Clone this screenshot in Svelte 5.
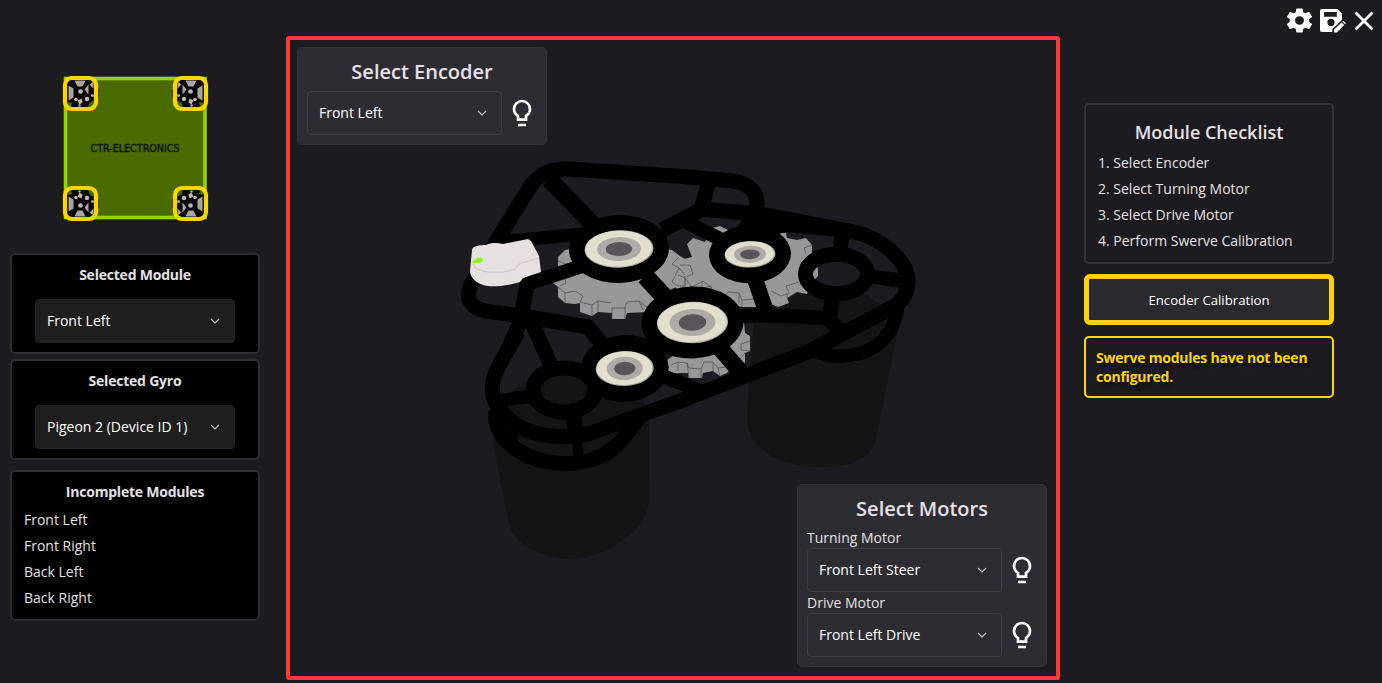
<script>
  const modules = ["Front Left", "Front Right", "Back Left", "Back Right"]
  const steps = [
    "Select Encoder",
    "Select Turning Motor",
    "Select Drive Motor",
    "Perform Swerve Calibration",
  ]

  // wheel pods on the robot overview, mirrored into each corner
  const pods = [
    { x: 80.5, y: 93.5, sx: 1, sy: 1 },
    { x: 190.5, y: 93.5, sx: -1, sy: 1 },
    { x: 80.5, y: 203.5, sx: 1, sy: -1 },
    { x: 190.5, y: 203.5, sx: -1, sy: -1 },
  ]

  // solid bearings: outer housing, then race, ring and bore
  const bearings = [
    { x: 619, y: 249, r: [50, 34, 34.5, 18.7, 22, 12, 13.2, 7.1] },
    { x: 750, y: 254.3, r: [41, 29, 25.5, 13.3, 16, 8.6, 9.8, 4.9] },
    { x: 692.5, y: 322.5, r: [51, 36, 35.7, 20.7, 23, 13.5, 13.7, 8.2] },
    { x: 624.7, y: 368.5, r: [44, 33.5, 29, 17.5, 18, 11.7, 10.7, 6.7] },
  ]

  const struts = [
    ["M549 179L596 228", 17],
    ["M499 242L583 234", 13],
    ["M527 284L582 266", 14],
    ["M528 280L521 316", 15],
    ["M523 316L508 349", 15],
    ["M529 316L552 368", 15],
    ["M708 184L701 210", 15],
    ["M712 204L662 230", 15],
    ["M684 221L722 240", 14],
    ["M754 276L767 314", 16],
    ["M738 316Q785 314 834 319", 14],
    ["M833 296L829 319L843 334", 15],
    ["M842 234L840 252", 15],
    ["M868 276L904 281", 14],
    ["M645 276L672 305", 18],
    ["M720 348L744 376", 17],
    ["M655 373L701 391", 14],
    ["M496 401L532 396", 13],
    ["M512 422L513 447", 10],
    ["M573 416L577 438", 16],
    ["M576 434L579 459", 10],
  ]
</script>

{#snippet select(value, quiet)}
  <button class="select" class:quiet>
    <span>{value}</span>
    <svg width="10" height="6" viewBox="0 0 10 6">
      <path d="M1 1L5 5L9 1" fill="none" stroke="#c4c4c6" stroke-width="1.1" />
    </svg>
  </button>
{/snippet}

{#snippet bulb()}
  <svg width="32" height="32" viewBox="0 0 24 24" fill="#fff">
    <path
      d="M12 2A7 7 0 0 1 19 9C19 11.4 17.8 13.5 16 14.7V18H8V14.7C6.2 13.5 5 11.4 5 9A7 7 0 0 1 12 2M9 20H15V22H9ZM12 4A5 5 0 0 0 7 9C7 11 8.2 12.8 10 13.6V16H14V13.6C15.8 12.8 17 11 17 9A5 5 0 0 0 12 4Z"
      fill-rule="evenodd"
    />
  </svg>
{/snippet}

<div class="app">
  <aside class="left">
    <svg class="robot" width="150" height="150" viewBox="61 73 150 150">
      <rect x="65.5" y="78.5" width="139.5" height="139" fill="#4a6b00" stroke="#94d500" stroke-width="3.6" />
      <text x="90.5" y="151.5" textLength="89" lengthAdjust="spacingAndGlyphs">CTR-ELECTRONICS</text>
      {#each pods as p}
        <g transform="translate({p.x} {p.y}) scale({p.sx} {p.sy})">
          <path d="M-14 -14H9L13 -11L18 -4V4L12 8L7 14L2 17H-3L-6 14L-14 11Z" fill="#050505" />
          <path d="M-12 -8L-7 -5V4L-12 7ZM-6 -13H5L2 -7H-3ZM4 -4L8 -9V1ZM9 -9L13 -12V-5Z" fill="#aaa69e" />
          <path d="M-13 9L-8 9L-10 13H-13ZM9 9L13 7V13H8Z" fill="#4a6b00" />
          <path d="M-3 7L1 5L2 9L-1 11Z" fill="#bdb9b2" />
          <circle cx="0" cy="-2" r="4.6" fill="#050505" />
          <circle cx="0" cy="-2" r="2.3" fill="#bdb9b2" />
          <circle cx="6.5" cy="5.5" r="2.2" fill="#bdb9b2" />
          <circle cx="-4.5" cy="6" r="1.8" fill="#bdb9b2" />
          <circle cx="-1" cy="12" r="1.3" fill="#aaa69e" />
          <circle cx="12" cy="2" r="1.5" fill="#aaa69e" />
        </g>
        <rect x={p.x - 15.5} y={p.y - 15.5} width="31" height="31" rx="7" fill="none" stroke="#ffd500" stroke-width="4.2" />
      {/each}
    </svg>

    <section class="card">
      <h3>Selected Module</h3>
      {@render select("Front Left", true)}
    </section>
    <section class="card">
      <h3>Selected Gyro</h3>
      {@render select("Pigeon 2 (Device ID 1)", true)}
    </section>
    <section class="card incomplete">
      <h3>Incomplete Modules</h3>
      <ul>
        {#each modules as name}
          <li>{name}</li>
        {/each}
      </ul>
    </section>
  </aside>

  <main>
    <svg width="766" height="636" viewBox="290 40 766 636">
      <!-- motors -->
      <g fill="#141414">
        <path d="M493 443L508 520C513 547 544 559 574 559C606 558 648 529 648.5 503L649 417L642 398L600 370L530 379L500 400Z" />
        <path d="M754 320L747 415C746 448 776 467 823 467C856 467 872 455 876 440L897 335L888 309L867 295L800 290L780 310Z" />
      </g>

      <!-- gears -->
      <g fill="#989898">
        <path d="M565 250L558 257V265L562 278L553 283L558 287V297L565 303L575 304L580 303V312L592 316L598 312L612 313V319H625L627 313L647 312L670 290L690 280V262L680 256L672 250L620 240Z" />
        <path d="M712 228L720 226L728 230L740 235L780 233L786 233L787 238L797 240L806 238L812 245V253L805 262L813 268L818 266V276L810 285L807 294L797 292L787 298L789 303L778 307L773 305L757 307H742L680 292L672 284V262L692 257L687 244L693 238L705 242Z" />
        <path d="M744 322L745 333L750 336V351L745 353V363L737 362L727 373L720 376L713 371L703 373L702 378H689L688 373L680 373L668 374L667 360L673 356L700 340Z" />
      </g>
      <g fill="none" stroke="#555" stroke-width=".8">
        <path d="M558 261L566 264M558 280L565 277L566 283L560 286M558 287L565 293V303M565 293L575 291L583 296L580 302M580 302L592 305V316M592 305L598 301L611 303M598 301V312M612 308H625V319M612 308V319M625 308L627 302L639 301L647 307M639 301L643 310" />
        <path d="M678 258L672 264L679 268L672 282L678 286H685V278L678 275M679 268L685 275M685 278L692 287L703 281L712 288M685 286V276M680 265L690 265L693 274L686 277M702 281V288L712 286M724 297L728 292L739 293L742 300L756 299M739 293V303M742 300V307" />
        <path d="M771 291L781 296L789 293L786 286L799 282M787 293V298M804 248L812 245M804 248L806 254" />
        <path d="M671 365L678 362L687 363L689 368L701 369L704 362L713 362L718 368L727 367M678 362V371M687 363L689 378M701 369V378M713 362V371M718 368L720 376M741 344L750 341M741 344V350L750 351M745 353L739 360" />
      </g>

      <!-- frame plates -->
      <g fill="none" stroke="#000" stroke-width="15" stroke-linejoin="round">
        <path d="M570 169C549 168 538 175 530 187L497 240L472 283C464 298 470 307 485 311L528 317L588 327L607 350" />
        <path d="M569 169L690 177L733 181C751 184 758 194 757 204L753 220" />
        <path d="M700 209L760 214L850 231C882 237 908 261 908 281C908 292 903 301 893 307L810 351L680 401L588 434C560 439 535 437 515 424C495 410 489 394 494 377C497 366 509 349 518 332" />
        <path d="M496 411C492 440 525 462 563 463.5C590 464 610 454 621 441L641 415" />
        <path d="M898 305C894 342 868 358 831 356L812 350" stroke-width="13.5" />
        <ellipse cx="564" cy="390" rx="31" ry="22" />
        <ellipse cx="836.5" cy="274" rx="31" ry="19.7" />
        {#each struts as [d, width]}
          <path {d} stroke-width={width} />
        {/each}
      </g>
      <path d="M735 232L742 220L765 212L850 224V238L785 232L760 240Z" />

      {#each bearings as b}
        <g transform="translate({b.x} {b.y}) rotate(-2)">
          <ellipse rx={b.r[0]} ry={b.r[1]} />
          <ellipse rx={b.r[2]} ry={b.r[3]} fill="#a9a9a4" />
          <ellipse rx={b.r[2] - 1} ry={b.r[3] - 0.7} cx="-.3" cy="-.3" fill="#e2dfcc" />
          <ellipse rx={b.r[4]} ry={b.r[5]} fill="#aeaaa8" />
          <ellipse rx={b.r[6]} ry={b.r[7]} fill="#5b5559" />
        </g>
      {/each}

      <!-- encoder -->
      <path
        d="M472 250C472 246 480 245 486 245C492 242 498 243 503 244L528 239L531 241L539 256L541 272L523 278L520 282C510 285 495 287 488 286C479 285 470 279 470 271Z"
        fill="#e6e0e1"
      />
      <path d="M473 264C476 272 489 273 504 272L514 270L519 264L539 258" fill="none" stroke="#cdc7c8" />
      <path d="M472 261L476 259C479 256 483 258 483 260C482 263 479 263 475 263L473 263Z" fill="#86ff16" />
    </svg>

    <section class="panel encoder">
      <h2>Select Encoder</h2>
      <div class="row">
        {@render select("Front Left", false)}
        {@render bulb()}
      </div>
    </section>

    <section class="panel motors">
      <h2>Select Motors</h2>
      <p>Turning Motor</p>
      <div class="row">
        {@render select("Front Left Steer", false)}
        {@render bulb()}
      </div>
      <p>Drive Motor</p>
      <div class="row">
        {@render select("Front Left Drive", false)}
        {@render bulb()}
      </div>
    </section>
  </main>

  <aside class="right">
    <nav>
      <svg width="31" height="29" viewBox="0 0 24 24" preserveAspectRatio="none" fill="#fff">
        <path
          d="M12,15.5A3.5,3.5 0 0,1 8.5,12A3.5,3.5 0 0,1 12,8.5A3.5,3.5 0 0,1 15.5,12A3.5,3.5 0 0,1 12,15.5M19.43,12.97C19.47,12.65 19.5,12.33 19.5,12C19.5,11.67 19.47,11.34 19.43,11L21.54,9.37C21.73,9.22 21.78,8.95 21.66,8.73L19.66,5.27C19.54,5.05 19.27,4.96 19.05,5.05L16.56,6.05C16.04,5.66 15.5,5.32 14.87,5.07L14.5,2.42C14.46,2.18 14.25,2 14,2H10C9.75,2 9.54,2.18 9.5,2.42L9.13,5.07C8.5,5.32 7.96,5.66 7.44,6.05L4.95,5.05C4.73,4.96 4.46,5.05 4.34,5.27L2.34,8.73C2.21,8.95 2.27,9.22 2.46,9.37L4.57,11C4.53,11.34 4.5,11.67 4.5,12C4.5,12.33 4.53,12.65 4.57,12.97L2.46,14.63C2.27,14.78 2.21,15.05 2.34,15.27L4.34,18.73C4.46,18.95 4.73,19.03 4.95,18.95L7.44,17.94C7.96,18.34 8.5,18.68 9.13,18.93L9.5,21.58C9.54,21.82 9.75,22 10,22H14C14.25,22 14.46,21.82 14.5,21.58L14.87,18.93C15.5,18.67 16.04,18.34 16.56,17.94L19.05,18.95C19.27,19.03 19.54,18.95 19.66,18.73L21.66,15.27C21.78,15.05 21.73,14.78 21.54,14.63L19.43,12.97Z"
        />
      </svg>
      <!-- floppy disk with pencil -->
      <svg width="30" height="30" viewBox="0 0 30 30" fill="#fff">
        <path
          d="M5 3H20.5L25 7.5V14L15.3 23V26H5A2 2 0 0 1 3 24V5A2 2 0 0 1 5 3M7 6V10.7H19.8V6ZM14 12.8A3.6 3.6 0 1 0 14 20A3.6 3.6 0 1 0 14 12.8"
          fill-rule="evenodd"
        />
        <path d="M17 26.4V23.6L24.6 16.4L27.2 19L19.8 26.4ZM25.4 15.7L26.4 14.8L29 17.3L28 18.3Z" />
      </svg>
      <svg width="30" height="30" viewBox="0 0 24 24">
        <path d="M5.2 5.2L18.8 18.8M18.8 5.2L5.2 18.8" stroke="#fff" stroke-width="2.2" />
      </svg>
    </nav>

    <section class="checklist">
      <h2>Module Checklist</h2>
      <ul>
        {#each steps as step, i}
          <li>{i + 1}. {step}</li>
        {/each}
      </ul>
    </section>
    <button class="calibrate">Encoder Calibration</button>
    <div class="warning">Swerve modules have not been configured.</div>
  </aside>
</div>

<style>
  :global(body) {
    margin: 0;
    background: #1c1b1f;
  }
  .app {
    display: flex;
    box-sizing: border-box;
    width: 1382px;
    height: 683px;
    overflow: hidden;
    background: #1c1b1f;
    color: #e6e1e5;
    font: 14px/26px "Open Sans", "Noto Sans", sans-serif;
  }
  .app * {
    box-sizing: border-box;
  }
  h2,
  h3,
  p,
  ul {
    margin: 0;
    padding: 0;
  }
  ul {
    list-style: none;
  }
  h2 {
    font-size: 20px;
    font-weight: 600;
    line-height: 28px;
    text-align: center;
  }
  h3 {
    font-size: 14px;
    font-weight: 700;
    line-height: 20px;
    letter-spacing: -0.22px;
    text-align: center;
  }
  svg {
    display: block;
    flex: none;
  }
  button {
    font: inherit;
    color: #fff;
  }

  .left {
    width: 250px;
    margin: 0 26px 0 10px;
    padding-top: 73px;
    flex: none;
  }
  .robot {
    margin: 0 0 30px 51px;
  }
  .robot text {
    font: 11px "DejaVu Sans", sans-serif;
    fill: #101800;
    stroke: #101800;
    stroke-width: 0.5px;
  }
  .card {
    height: 101px;
    margin-bottom: 5px;
    padding-top: 10px;
    background: #000;
    border: 2px solid #2e2d30;
    border-radius: 5px;
  }
  .card .select {
    margin: 14px auto 0;
  }
  .incomplete {
    height: 151px;
    margin-top: 10px;
  }
  .incomplete ul {
    padding: 5px 12px;
  }

  .select {
    display: flex;
    flex: none;
    align-items: center;
    justify-content: space-between;
    width: 195px;
    height: 44px;
    padding: 0 14px 0 11px;
    background: #2d2c32;
    border: 1px solid #3e3d42;
    border-radius: 4px;
  }
  .select.quiet {
    width: 200px;
    background: #1e1e1e;
    border-color: #222;
  }

  main {
    display: grid;
    flex: none;
    width: 774px;
    height: 644px;
    margin-top: 36px;
    border: 4px solid #f53a3a;
    border-radius: 3px;
  }
  main > * {
    grid-area: 1 / 1;
  }
  .panel {
    width: 250px;
    padding: 9px;
    background: #2d2c32;
    border: 1px solid #333237;
    border-radius: 5px;
  }
  .panel h2 {
    line-height: 30px;
  }
  .encoder {
    height: 98px;
    margin: 7px;
  }
  .encoder .row {
    margin-top: 4px;
  }
  .motors {
    height: 183px;
    place-self: end;
    margin: 9px;
  }
  .motors p {
    height: 21px;
    line-height: 21px;
  }
  .motors h2 {
    margin-bottom: 3px;
  }
  .row {
    display: flex;
    align-items: center;
    gap: 4px;
  }

  .right {
    width: 298px;
    margin-left: 24px;
  }
  nav {
    display: flex;
    justify-content: flex-end;
    gap: 2px;
    height: 103px;
    padding-top: 6px;
    margin-right: 3px;
  }
  .checklist,
  .calibrate,
  .warning {
    width: 250px;
    border-radius: 5px;
  }
  .checklist {
    height: 161px;
    padding: 13px 12px;
    border: 2px solid #343337;
  }
  .checklist h2 {
    font-size: 18px;
    margin-bottom: 4px;
  }
  .calibrate {
    display: block;
    height: 51px;
    margin: 10px 0 11px;
    background: #2a292e;
    border: 5px solid #ffd500;
    border-radius: 6px;
    font-size: 13.2px;
  }
  .warning {
    height: 62px;
    padding: 10px;
    border: 2px solid #ffd500;
    color: #ffd500;
    font-weight: 700;
    letter-spacing: -0.22px;
    line-height: 19px;
    text-shadow: 2px 3px 4px rgba(0, 0, 0, 0.6);
  }
</style>
